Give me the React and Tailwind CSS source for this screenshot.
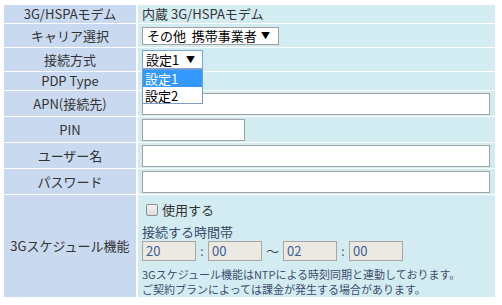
import React from 'react';

const labelCls = 'bg-[#c9d9f0] flex items-center justify-center text-[13px] text-[#333] whitespace-nowrap';
const valueCls = 'bg-[#d3ecf2] flex items-center pl-[4px] text-[13px] text-[#333]';
const inputCls = 'h-[22px] bg-white border border-[#a3a3a3] outline-none';
const timeCls = 'w-[54px] h-[20px] bg-[#ebe9e2] border border-[#a6a6a6] text-[13px] leading-[18px] pl-[3px] text-[#3b5b95]';

function App() {
    return (
        <div className="w-[502px] h-[305px] bg-white pt-[5px] pl-[4px]" style={{ fontFamily: '"Noto Sans CJK JP", sans-serif' }}>
            <div className="grid grid-cols-[132px_357px] grid-rows-[18px_23px_23px_18px_25px_25px_25px_25px_102px] gap-x-[2px] gap-y-px">
                <div className={labelCls}>3G/HSPAモデム</div>
                <div className={valueCls + ' text-[12px]'}>内蔵 3G/HSPAモデム</div>

                <div className={labelCls}>キャリア選択</div>
                <div className={valueCls}>
                    <div className="w-[137px] h-[18px] bg-white border border-[#a0a0a0] flex items-center justify-between pl-[4px] pr-[8px] text-[13px] text-black leading-none whitespace-nowrap">
                        <span>その他&nbsp;&nbsp;携帯事業者</span>
                        <span className="text-[9px]">▼</span>
                    </div>
                </div>

                <div className={labelCls}>接続方式</div>
                <div className={valueCls + ' relative'}>
                    <div className="w-[61px] h-[19px] bg-white border border-[#7ba4d8] flex items-center justify-between pl-[3px] pr-[7px] text-[13px] text-black leading-none whitespace-nowrap">
                        <span>設定1</span>
                        <span className="text-[9px]">▼</span>
                    </div>
                    <div className="absolute left-[4px] top-[21px] z-10 w-[61px] bg-white border border-[#7a9cc8] text-[13px] leading-none">
                        <div className="h-[17px] bg-[#3399ff] text-white flex items-center pl-[2px]">設定1</div>
                        <div className="h-[16px] text-black flex items-center pl-[2px]">設定2</div>
                    </div>
                </div>

                <div className={labelCls}>PDP Type</div>
                <div className={valueCls}></div>

                <div className={labelCls}>APN(接続先)</div>
                <div className={valueCls}>
                    <input className={inputCls + ' w-[348px]'} />
                </div>

                <div className={labelCls}>PIN</div>
                <div className={valueCls}>
                    <input className={inputCls + ' w-[103px]'} />
                </div>

                <div className={labelCls}>ユーザー名</div>
                <div className={valueCls}>
                    <input className={inputCls + ' w-[348px]'} />
                </div>

                <div className={labelCls}>パスワード</div>
                <div className={valueCls}>
                    <input className={inputCls + ' w-[348px]'} />
                </div>

                <div className={labelCls}>3Gスケジュール機能</div>
                <div className="bg-[#d3ecf2] pl-[4px] pt-[8px] text-[#333] flex flex-col">
                    <div className="flex items-center h-[14px] pl-[4px] text-[13px]">
                        <div className="w-[12px] h-[12px] border border-[#8e8e8e] rounded-[2px] bg-gradient-to-b from-[#f2f2f2] to-[#dcdcdc]"></div>
                        <span className="ml-[4px]">使用する</span>
                    </div>
                    <div className="mt-[8px] text-[13px] leading-[14px] text-[#3a4a6a]">接続する時間帯</div>
                    <div className="flex items-center mt-[2px] h-[20px]">
                        <div className={timeCls}>20</div>
                        <span className="w-[12px] text-center text-[12px] text-[#555]">:</span>
                        <div className={timeCls}>00</div>
                        <span className="w-[21px] text-center text-[13px] text-[#444]">〜</span>
                        <div className={timeCls}>02</div>
                        <span className="w-[12px] text-center text-[12px] text-[#555]">:</span>
                        <div className={timeCls}>00</div>
                    </div>
                    <div className="mt-[6px] text-[11px] leading-[15px] text-[#3e4d6e] whitespace-nowrap">
                        <div>3Gスケジュール機能はNTPによる時刻同期と連動しております。</div>
                        <div>ご契約プランによっては課金が発生する場合があります。</div>
                    </div>
                </div>
            </div>
        </div>
    );
}

export default App;
